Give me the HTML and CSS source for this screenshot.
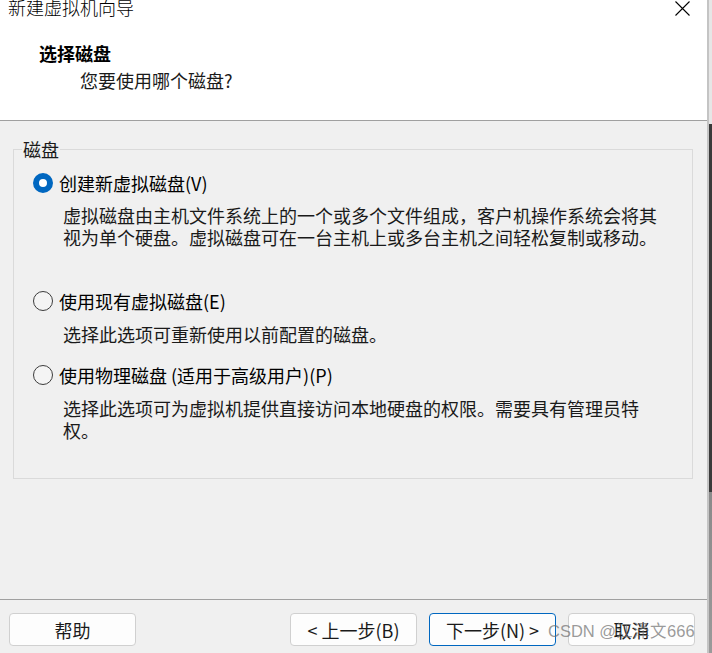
FILE: index.html
```html
<!DOCTYPE html>
<html lang="zh-CN">
<head>
<meta charset="utf-8">
<title>新建虚拟机向导</title>
<link rel="stylesheet" href="styles.css">
</head>
<body>
<div class="screen">
  <div class="window">
    <header class="header">
      <div class="titlebar">
        <span class="title">新建虚拟机向导</span>
        <svg class="close" width="17" height="17" viewBox="0 0 17 17" aria-hidden="true">
          <path d="M1.5 1.5 L15.5 15.5 M15.5 1.5 L1.5 15.5" stroke="#000" stroke-width="1.1" fill="none"/>
        </svg>
      </div>
      <div class="heading">选择磁盘</div>
      <div class="subheading">您要使用哪个磁盘?</div>
    </header>

    <main class="main">
      <fieldset class="group">
        <legend class="group-label">磁盘</legend>
        <div class="group-body">
          <div class="option">
            <span class="radio radio-on"></span>
            <span class="option-label">创建新虚拟磁盘(V)</span>
          </div>
          <p class="desc desc-first">虚拟磁盘由主机文件系统上的一个或多个文件组成，客户机操作系统会将其视为单个硬盘。虚拟磁盘可在一台主机上或多台主机之间轻松复制或移动。</p>

          <div class="option option-second">
            <span class="radio"></span>
            <span class="option-label">使用现有虚拟磁盘(E)</span>
          </div>
          <p class="desc">选择此选项可重新使用以前配置的磁盘。</p>

          <div class="option option-third">
            <span class="radio"></span>
            <span class="option-label">使用物理磁盘 (适用于高级用户)(P)</span>
          </div>
          <p class="desc">选择此选项可为虚拟机提供直接访问本地硬盘的权限。需要具有管理员特权。</p>
        </div>
      </fieldset>
    </main>

    <footer class="footer">
      <button class="btn" type="button">帮助</button>
      <div class="btn-group">
        <button class="btn" type="button">&lt;&nbsp;上一步(B)</button>
        <button class="btn btn-default" type="button">下一步(N)&nbsp;&gt;</button>
        <button class="btn" type="button">取消</button>
      </div>
      <span class="watermark">CSDN @江泽文666</span>
    </footer>
  </div>
  <div class="edge"></div>
</div>
</body>
</html>
```

FILE: styles.css
```css
* {
  box-sizing: border-box;
}

html, body {
  margin: 0;
  padding: 0;
}

body {
  font-family: "Noto Sans CJK SC", "Noto Sans", sans-serif;
  font-size: 18px;
  line-height: 22px;
  color: #1a1a1a;
  background: #f0f0f0;
  overflow: hidden;
}

.screen {
  display: flex;
  width: 712px;
  height: 653px;
}

.window {
  width: 709px;
  height: 653px;
  display: flex;
  flex-direction: column;
  background: #f0f0f0;
  border-right: 2px solid #c4c4c4;
}

.edge {
  flex: 1;
  background: linear-gradient(to bottom, #e6e6e6 0, #e6e6e6 124px, #3a3a3a 124px, #3a3a3a 492px, #8a8a8a 492px, #9a9a9a 653px);
}

/* header */
.header {
  background: #ffffff;
  height: 121px;
  border-bottom: 1px solid #a0a0a0;
}

.titlebar {
  display: flex;
  justify-content: space-between;
  align-items: flex-start;
  height: 18px;
  padding: 0 16px 0 8px;
}

.title {
  font-size: 18px;
  line-height: 14px;
  color: #000;
  font-weight: 300;
}

.close {
  display: block;
  margin-top: 0;
}

.heading {
  margin: 24px 0 0 39px;
  font-weight: 700;
  color: #000;
  line-height: 22px;
}

.subheading {
  margin: 5px 0 0 80px;
  color: #1a1a1a;
}

/* main */
.main {
  flex: 1;
}

.group {
  margin: 17px 0 0 13px;
  width: 680px;
  padding: 0;
  border: 1px solid #dadada;
}

.group-label {
  margin-left: 8px;
  padding: 0 1px;
  line-height: 22px;
  color: #1a1a1a;
}

.group-body {
  padding: 12px 0 37px 19px;
}

.option {
  display: flex;
  align-items: center;
  height: 22px;
  gap: 6px;
  color: #000;
}

.option-second {
  margin-top: 42px;
}

.option-third {
  margin-top: 19px;
}

.radio {
  width: 20px;
  height: 20px;
  border-radius: 50%;
  border: 1px solid #3c3c3c;
  background: #f4f4f4;
  flex: none;
}

.radio-on {
  border: 6px solid #0067c0;
  background: #ffffff;
}

.desc {
  margin: 11px 0 0 30px;
  width: 600px;
  color: #1a1a1a;
}

.desc-first {
  margin-top: 10px;
}

/* footer */
.footer {
  position: relative;
  display: flex;
  justify-content: space-between;
  align-items: flex-start;
  height: 54px;
  border-top: 1px solid #a0a0a0;
  padding: 13px 12px 0 9px;
}

.btn-group {
  display: flex;
  gap: 12px;
}

.btn {
  width: 127px;
  height: 33px;
  padding: 0;
  font-family: "Noto Sans CJK SC", "Noto Sans", sans-serif;
  font-size: 18px;
  line-height: 22px;
  color: #1a1a1a;
  background: #fdfdfd;
  border: 1px solid #d0d0d0;
  border-radius: 4px;
}

.btn-default {
  border-color: #0067c0;
}

.watermark {
  position: absolute;
  left: 548px;
  top: 21px;
  font-family: "Liberation Sans", Arial, sans-serif;
  font-size: 16.5px;
  line-height: 20px;
  color: rgba(110, 110, 110, 0.7);
  white-space: nowrap;
}
```
